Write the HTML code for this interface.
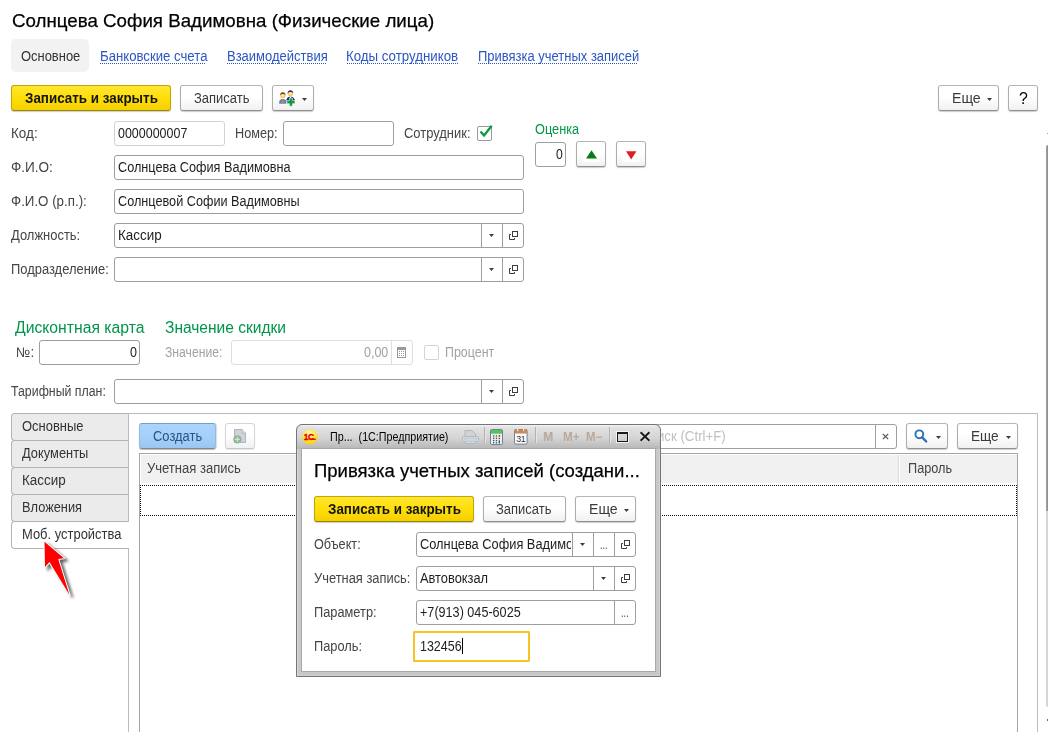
<!DOCTYPE html>
<html lang="ru">
<head>
<meta charset="utf-8">
<title>Солнцева София Вадимовна (Физические лица)</title>
<style>
html,body{margin:0;padding:0;background:#fff;}
body{width:1048px;height:736px;position:relative;overflow:hidden;font-family:"Liberation Sans",sans-serif;font-size:14px;color:#333;}
.a{position:absolute;box-sizing:border-box;display:block;}
.t{position:absolute;white-space:pre;transform-origin:0 0;}
.btn{position:absolute;box-sizing:border-box;border:1px solid #adadad;border-top-color:#b6b6b6;border-bottom-color:#909090;border-radius:3px;background:linear-gradient(#fff 0,#fff 45%,#f1f1f1 100%);box-shadow:0 1px 1px rgba(0,0,0,.20);}
.ybtn{border-color:#c2a500;border-bottom-color:#9c8600;background:linear-gradient(#ffe733 0,#ffdf0a 45%,#f5d000 100%);}
.bbtn{border-color:#8fbcdf;border-top-color:#6fa2c8;border-bottom-color:#848484;background:linear-gradient(#acd5fd 0,#a4cff9 55%,#9ac7f1 100%);box-shadow:0 1px 1px rgba(0,0,0,.25),1px 0 1px rgba(0,0,0,.12);}
.dbtn{border-color:#d6d6d6;border-bottom-color:#c6c6c6;box-shadow:0 1px 1px rgba(0,0,0,.10);}
.inp{position:absolute;box-sizing:border-box;border:1px solid #9e9e9e;border-radius:3px;background:#fff;}
.inp.ro{border-color:#d2d2d2;}
.inp.dis{border-color:#dedede;}
</style>
</head>
<body>
<div class="t" style="left:11.54px;top:10px;font-size:19px;line-height:22px;height:22px;color:#000;transform:scaleX(0.9853);-webkit-text-stroke:0.25px #000;">Солнцева София Вадимовна (Физические лица)</div>
<div class="a" style="left:11px;top:39px;width:78px;height:33px;background:#f2f2f2;border-radius:5px;"></div>
<div class="t" style="left:20.75px;top:48px;font-size:14px;line-height:16px;height:16px;color:#333;transform:scaleX(0.9240);">Основное</div>
<div class="t" style="left:99.74px;top:48px;font-size:14px;line-height:16px;height:16px;color:#2b55c6;transform:scaleX(0.9413);">Банковские счета</div>
<div class="a" style="left:100px;top:63px;width:106px;height:1px;background:repeating-linear-gradient(90deg,#2b55c6 0 1px,transparent 1px 2px);"></div>
<div class="t" style="left:226.55px;top:48px;font-size:14px;line-height:16px;height:16px;color:#2b55c6;transform:scaleX(0.9279);">Взаимодействия</div>
<div class="a" style="left:227px;top:63px;width:100px;height:1px;background:repeating-linear-gradient(90deg,#2b55c6 0 1px,transparent 1px 2px);"></div>
<div class="t" style="left:346.23px;top:48px;font-size:14px;line-height:16px;height:16px;color:#2b55c6;transform:scaleX(0.9490);">Коды сотрудников</div>
<div class="a" style="left:347px;top:63px;width:111px;height:1px;background:repeating-linear-gradient(90deg,#2b55c6 0 1px,transparent 1px 2px);"></div>
<div class="t" style="left:477.55px;top:48px;font-size:14px;line-height:16px;height:16px;color:#2b55c6;transform:scaleX(0.9270);">Привязка учетных записей</div>
<div class="a" style="left:478px;top:63px;width:160px;height:1px;background:repeating-linear-gradient(90deg,#2b55c6 0 1px,transparent 1px 2px);"></div>
<div class="btn ybtn" style="left:11px;top:85px;width:160px;height:26px;"></div>
<div class="t" style="left:24.83px;top:90px;font-size:14px;line-height:16px;height:16px;color:#141414;font-weight:700;transform:scaleX(0.9577);">Записать и закрыть</div>
<div class="btn " style="left:180px;top:85px;width:83px;height:26px;"></div>
<div class="t" style="left:193.65px;top:90px;font-size:14px;line-height:16px;height:16px;color:#3a3a3a;transform:scaleX(0.9257);">Записать</div>
<div class="btn " style="left:272px;top:85px;width:42px;height:26px;"></div>
<svg class="a" style="left:278px;top:89px" width="19" height="18" viewBox="0 0 19 18">
<defs><radialGradient id="hd" cx="50%" cy="45%" r="60%"><stop offset="0" stop-color="#fff3c4"/><stop offset="1" stop-color="#e9b24a"/></radialGradient></defs>
<path d="M8.6 10.2c1-2 2.4-2.6 3.9-2.6s3.1.7 4 2.6v2.6H8.6z" fill="#2b2f66"/>
<path d="M11.6 7.6h1.8l-.9 3z" fill="#fff"/>
<circle cx="12.4" cy="4.6" r="2.7" fill="url(#hd)"/>
<path d="M9.6 4.3c0-2 1.3-3 2.8-3s2.8 1 2.8 3c-.8-1-1.7-1.4-2.8-1.4s-2 .4-2.8 1.400z" fill="#35305a"/>
<path d="M1.200 14.800v-2.400c.6-1.900 2-2.500 3.600-2.500s3 .6 3.600 2.500v2.400z" fill="#5d89b4"/>
<path d="M4.300 10h1.100l.2 4.800H4.100z" fill="#ee7a5a"/>
<circle cx="4.800" cy="6.600" r="2.600" fill="url(#hd)"/>
<path d="M2.100 6.300c0-2 1.200-3 2.700-3s2.700 1 2.700 3c-.8-1-1.600-1.300-2.700-1.300s-1.900.3-2.700 1.300z" fill="#7a3b0c"/>
<path d="M11.400 9.100h3v2.600h2.600v3h-2.600v2.600h-3v-2.600H8.800v-3h2.600z" fill="#0b9a3e" stroke="#fff" stroke-width=".6"/>
</svg>
<svg class="a" style="left:302px;top:98px" width="5" height="3" viewBox="0 0 5 3"><path d="M0 0h5L2.5 3z" fill="#3c3c3c"/></svg>
<div class="btn " style="left:938px;top:85px;width:61px;height:26px;"></div>
<div class="t" style="left:951.61px;top:90px;font-size:14px;line-height:16px;height:16px;color:#3a3a3a;transform:scaleX(1.0063);">Еще</div>
<svg class="a" style="left:987px;top:98px" width="5" height="3" viewBox="0 0 5 3"><path d="M0 0h5L2.5 3z" fill="#3c3c3c"/></svg>
<div class="btn " style="left:1008px;top:85px;width:30px;height:26px;"></div>
<div class="t" style="left:1018.95px;top:89px;font-size:16px;line-height:20px;height:20px;color:#000;transform:scaleX(0.9903);">?</div>
<div class="t" style="left:11.13px;top:125px;font-size:14px;line-height:16px;height:16px;color:#454545;transform:scaleX(0.9631);">Код:</div>
<div class="inp ro" style="left:114px;top:121px;width:111px;height:25px;"></div>
<div class="t" style="left:118.06px;top:125px;font-size:14px;line-height:16px;height:16px;color:#1e1e1e;transform:scaleX(0.8909);">0000000007</div>
<div class="t" style="left:235.26px;top:125px;font-size:14px;line-height:16px;height:16px;color:#454545;transform:scaleX(0.9063);">Номер:</div>
<div class="inp " style="left:283px;top:121px;width:111px;height:25px;"></div>
<div class="t" style="left:403.95px;top:125px;font-size:14px;line-height:16px;height:16px;color:#454545;transform:scaleX(0.9245);">Сотрудник:</div>
<div class="a" style="left:477px;top:126px;width:15px;height:15px;border:1px solid #9a9a9a;border-radius:2px;background:#fff;"></div>
<svg class="a" style="left:478px;top:123px" width="17" height="16" viewBox="0 0 17 16"><path d="M2.500 8.500L6.100 12.500L13.700 2.700" fill="none" stroke="#0a9a46" stroke-width="2.300" stroke-linecap="butt" stroke-linejoin="miter"/></svg>
<div class="t" style="left:535.15px;top:121px;font-size:14px;line-height:16px;height:16px;color:#00964a;transform:scaleX(0.9109);">Оценка</div>
<div class="inp " style="left:535px;top:142px;width:31px;height:25px;"></div>
<div class="t" style="left:556.27px;top:146px;font-size:14px;line-height:16px;height:16px;color:#1e1e1e;transform:scaleX(0.8696);">0</div>
<div class="btn " style="left:576px;top:141px;width:30px;height:26px;"></div>
<div class="a" style="left:583px;top:146px;width:16px;height:16px;background:#fff;"></div>
<svg class="a" style="left:586px;top:150px" width="11" height="9" viewBox="0 0 11 9"><path d="M5.500 0.300L11 8.600H0z" fill="#0b7a12"/></svg>
<div class="btn " style="left:616px;top:141px;width:30px;height:26px;"></div>
<div class="a" style="left:623px;top:146px;width:16px;height:16px;background:#fff;"></div>
<svg class="a" style="left:626px;top:150.500px" width="11" height="9" viewBox="0 0 11 9"><path d="M0 0.300h10.400L5.200 8.400z" fill="#e11b22"/></svg>
<div class="t" style="left:11.13px;top:159px;font-size:14px;line-height:16px;height:16px;color:#454545;transform:scaleX(0.9680);">Ф.И.О:</div>
<div class="inp " style="left:114px;top:155px;width:410px;height:25px;"></div>
<div class="t" style="left:118.06px;top:159px;font-size:14px;line-height:16px;height:16px;color:#1e1e1e;transform:scaleX(0.9070);">Солнцева София Вадимовна</div>
<div class="t" style="left:11.13px;top:193px;font-size:14px;line-height:16px;height:16px;color:#454545;transform:scaleX(0.9517);">Ф.И.О (р.п.):</div>
<div class="inp " style="left:114px;top:189px;width:410px;height:25px;"></div>
<div class="t" style="left:118.06px;top:193px;font-size:14px;line-height:16px;height:16px;color:#1e1e1e;transform:scaleX(0.9056);">Солнцевой Софии Вадимовны</div>
<div class="t" style="left:10.75px;top:227px;font-size:14px;line-height:16px;height:16px;color:#454545;transform:scaleX(0.9253);">Должность:</div>
<div class="inp " style="left:114px;top:223px;width:410px;height:25px;"></div><div class="a" style="left:481px;top:224px;width:1px;height:23px;background:#9e9e9e;"></div><div class="a" style="left:502px;top:224px;width:1px;height:23px;background:#9e9e9e;"></div><svg class="a" style="left:489px;top:234px" width="5" height="3" viewBox="0 0 5 3"><path d="M0 0h5L2.5 3z" fill="#3c3c3c"/></svg><svg class="a" style="left:509px;top:231px" width="9" height="9" viewBox="0 0 9 9" fill="none" stroke="#3c3c3c" stroke-width="1"><rect x="3.5" y="0.5" width="5" height="5"/><path d="M2 3.5H0.5V8.5H5.5V7"/></svg>
<div class="t" style="left:118.03px;top:227px;font-size:14px;line-height:16px;height:16px;color:#1e1e1e;transform:scaleX(0.9587);">Кассир</div>
<div class="t" style="left:11.15px;top:261px;font-size:14px;line-height:16px;height:16px;color:#454545;transform:scaleX(0.9231);">Подразделение:</div>
<div class="inp " style="left:114px;top:257px;width:410px;height:25px;"></div><div class="a" style="left:481px;top:258px;width:1px;height:23px;background:#9e9e9e;"></div><div class="a" style="left:502px;top:258px;width:1px;height:23px;background:#9e9e9e;"></div><svg class="a" style="left:489px;top:268px" width="5" height="3" viewBox="0 0 5 3"><path d="M0 0h5L2.5 3z" fill="#3c3c3c"/></svg><svg class="a" style="left:509px;top:265px" width="9" height="9" viewBox="0 0 9 9" fill="none" stroke="#3c3c3c" stroke-width="1"><rect x="3.5" y="0.5" width="5" height="5"/><path d="M2 3.5H0.5V8.5H5.5V7"/></svg>
<div class="t" style="left:15.15px;top:318px;font-size:16px;line-height:20px;height:20px;color:#00964a;transform:scaleX(0.9827);">Дисконтная карта</div>
<div class="t" style="left:164.96px;top:318px;font-size:16px;line-height:20px;height:20px;color:#00964a;transform:scaleX(0.9712);">Значение скидки</div>
<div class="t" style="left:16.13px;top:344px;font-size:14px;line-height:16px;height:16px;color:#454545;transform:scaleX(0.9608);">№:</div>
<div class="inp " style="left:39px;top:340px;width:101px;height:25px;"></div>
<div class="t" style="left:130.16px;top:344px;font-size:14px;line-height:16px;height:16px;color:#1e1e1e;transform:scaleX(0.8952);">0</div>
<div class="t" style="left:165.07px;top:344px;font-size:14px;line-height:16px;height:16px;color:#a2a2a2;transform:scaleX(0.8696);">Значение:</div>
<div class="inp dis" style="left:231px;top:340px;width:182px;height:25px;"></div>
<div class="t" style="left:364.36px;top:344px;font-size:14px;line-height:16px;height:16px;color:#a2a2a2;transform:scaleX(0.8910);">0,00</div>
<div class="a" style="left:391px;top:341px;width:1px;height:23px;background:#dedede;"></div>
<svg class="a" style="left:397px;top:347px" width="9" height="11" viewBox="0 0 9 11"><rect x=".5" y=".5" width="8" height="10" fill="#fff" stroke="#9a9a9a"/><rect x="1" y="1" width="7" height="2" fill="#9a9a9a"/>
<g fill="#9a9a9a"><rect x="2" y="4" width="1" height="1"/><rect x="4" y="4" width="1" height="1"/><rect x="6" y="4" width="1" height="1"/><rect x="2" y="6" width="1" height="1"/><rect x="4" y="6" width="1" height="1"/><rect x="6" y="6" width="1" height="1"/><rect x="2" y="8" width="1" height="1"/><rect x="4" y="8" width="1" height="1"/><rect x="6" y="8" width="1" height="1"/></g></svg>
<div class="a" style="left:424px;top:345px;width:15px;height:15px;border:1px solid #d4d4d4;border-radius:2px;background:#fff;"></div>
<div class="t" style="left:444.86px;top:344px;font-size:14px;line-height:16px;height:16px;color:#a2a2a2;transform:scaleX(0.8889);">Процент</div>
<div class="t" style="left:11.07px;top:383px;font-size:14px;line-height:16px;height:16px;color:#454545;transform:scaleX(0.8826);">Тарифный план:</div>
<div class="inp " style="left:114px;top:379px;width:410px;height:25px;"></div><div class="a" style="left:481px;top:380px;width:1px;height:23px;background:#9e9e9e;"></div><div class="a" style="left:502px;top:380px;width:1px;height:23px;background:#9e9e9e;"></div><svg class="a" style="left:489px;top:390px" width="5" height="3" viewBox="0 0 5 3"><path d="M0 0h5L2.5 3z" fill="#3c3c3c"/></svg><svg class="a" style="left:509px;top:387px" width="9" height="9" viewBox="0 0 9 9" fill="none" stroke="#3c3c3c" stroke-width="1"><rect x="3.5" y="0.5" width="5" height="5"/><path d="M2 3.5H0.5V8.5H5.5V7"/></svg>
<div class="a" style="left:128px;top:413px;width:910px;height:319px;border:1px solid #bcbcbc;border-bottom:none;"></div>
<div class="a" style="left:11px;top:413px;width:118px;height:28px;border:1px solid #b4b4b4;border-right:1px solid #bcbcbc;border-radius:4px 0 0 4px;background:#ebebeb;"></div>
<div class="t" style="left:21.85px;top:418px;font-size:14px;line-height:16px;height:16px;color:#333;transform:scaleX(0.9254);">Основные</div>
<div class="a" style="left:11px;top:440px;width:118px;height:28px;border:1px solid #b4b4b4;border-right:1px solid #bcbcbc;border-radius:4px 0 0 4px;background:#ebebeb;"></div>
<div class="t" style="left:21.85px;top:445px;font-size:14px;line-height:16px;height:16px;color:#333;transform:scaleX(0.9184);">Документы</div>
<div class="a" style="left:11px;top:467px;width:118px;height:28px;border:1px solid #b4b4b4;border-right:1px solid #bcbcbc;border-radius:4px 0 0 4px;background:#ebebeb;"></div>
<div class="t" style="left:21.83px;top:472px;font-size:14px;line-height:16px;height:16px;color:#333;transform:scaleX(0.9587);">Кассир</div>
<div class="a" style="left:11px;top:494px;width:118px;height:28px;border:1px solid #b4b4b4;border-right:1px solid #bcbcbc;border-radius:4px 0 0 4px;background:#ebebeb;"></div>
<div class="t" style="left:21.85px;top:499px;font-size:14px;line-height:16px;height:16px;color:#333;transform:scaleX(0.9146);">Вложения</div>
<div class="a" style="left:11px;top:521px;width:118px;height:28px;border:1px solid #b4b4b4;border-right:none;border-radius:4px 0 0 4px;background:#fff;"></div>
<div class="t" style="left:21.85px;top:526px;font-size:14px;line-height:16px;height:16px;color:#333;transform:scaleX(0.9242);">Моб. устройства</div>
<div class="btn bbtn" style="left:139px;top:423px;width:77px;height:26px;"></div>
<div class="t" style="left:152.85px;top:428px;font-size:14px;line-height:16px;height:16px;color:#2b4f86;transform:scaleX(0.9241);">Создать</div>
<div class="btn dbtn" style="left:225px;top:423px;width:30px;height:26px;"></div>
<svg class="a" style="left:232px;top:428px" width="15" height="17" viewBox="0 0 15 17"><path d="M2.500 1.500h7.500l3.500 3.500v9.500H2.500z" fill="#d3d3d3" stroke="#a3b6d2"/><path d="M10 1.500v3.500h3.500" fill="#eee" stroke="#a3b6d2"/><circle cx="5.400" cy="11.400" r="4.200" fill="#8db596"/><path d="M5.400 8.800v5.200M2.800 11.400h5.200" stroke="#cfe3d3" stroke-width="1.300"/></svg>
<div class="inp " style="left:500px;top:424px;width:397px;height:25px;"></div>
<div class="t" style="left:639.54px;top:428px;font-size:14px;line-height:16px;height:16px;color:#c0c0c3;transform:scaleX(0.9477);">Поиск (Ctrl+F)</div>
<div class="a" style="left:875px;top:425px;width:1px;height:23px;background:#9e9e9e;"></div>
<svg class="a" style="left:882px;top:433px" width="7" height="7" viewBox="0 0 7 7"><path d="M.8.800l5.400 5.400M6.200.800L.8 6.200" stroke="#4a4a4a" stroke-width="1.100"/></svg>
<div class="btn " style="left:906px;top:423px;width:42px;height:26px;"></div>
<svg class="a" style="left:913px;top:428px" width="16" height="16" viewBox="0 0 16 16"><circle cx="6.300" cy="6.300" r="3.900" fill="#fff" stroke="#2c71b3" stroke-width="1.900"/><path d="M9.200 9.300l4 4.200" stroke="#2c71b3" stroke-width="2.400" stroke-linecap="round"/></svg>
<svg class="a" style="left:936px;top:436px" width="5" height="3" viewBox="0 0 5 3"><path d="M0 0h5L2.5 3z" fill="#3c3c3c"/></svg>
<div class="btn " style="left:957px;top:423px;width:61px;height:26px;"></div>
<div class="t" style="left:971.12px;top:428px;font-size:14px;line-height:16px;height:16px;color:#3a3a3a;transform:scaleX(0.9712);">Еще</div>
<svg class="a" style="left:1006px;top:436px" width="5" height="3" viewBox="0 0 5 3"><path d="M0 0h5L2.5 3z" fill="#3c3c3c"/></svg>
<div class="a" style="left:139px;top:453px;width:879px;height:279px;border:1px solid #a6a6a6;border-bottom:none;background:#fff;"></div>
<div class="a" style="left:141px;top:455px;width:876px;height:28px;background:#f0f0f0;"></div>
<div class="a" style="left:898px;top:455px;width:1px;height:28px;background:#dadada;"></div>
<div class="a" style="left:899px;top:455px;width:1px;height:28px;background:#fff;"></div>
<div class="t" style="left:147.34px;top:460px;font-size:14px;line-height:16px;height:16px;color:#454545;transform:scaleX(0.9302);">Учетная запись</div>
<div class="t" style="left:907.96px;top:460px;font-size:14px;line-height:16px;height:16px;color:#454545;transform:scaleX(0.9074);">Пароль</div>
<div class="a" style="left:140px;top:485px;width:877px;height:31px;border:1px dotted #111;"></div>
<svg class="a" style="left:30px;top:530px" width="60" height="80" viewBox="30 530 60 80"><defs><filter id="sh" x="-50%" y="-50%" width="200%" height="200%"><feGaussianBlur stdDeviation="1.500"/></filter></defs>
<path d="M44.500 541.800L64 558.200L58.200 559.100L69.500 595.100L49.500 562L45 566.900z" transform="translate(3.200 2.600)" fill="#000" stroke="#000" stroke-width="1.500" opacity=".62" filter="url(#sh)"/>
<path d="M44.500 541.800L64 558.200L58.200 559.100L69.500 595.100L49.500 562L45 566.900z" fill="#ff0000" stroke="#fff" stroke-width="2" stroke-linejoin="round" paint-order="stroke"/></svg>
<div class="a" style="left:1046px;top:145px;width:2px;height:366px;background:linear-gradient(90deg,#a4a4a4,#8e8e8e);border-radius:2px 0 0 0;"></div>
<div class="a" style="left:1046px;top:511px;width:2px;height:196px;background:#d6d6d6;border-radius:0 0 0 2px;"></div>
<div class="a" style="left:1047px;top:133px;width:1px;height:1px;background:#a0a0a0;"></div>
<div class="a" style="left:1047px;top:719px;width:1px;height:2px;background:#6a6a6a;"></div>
<div class="a" style="left:296px;top:424px;width:365px;height:253px;background:#c7c8ca;border:1px solid #757575;border-radius:6px 6px 0 0;box-shadow:inset 1px 0 0 #dadada,inset -1px 0 0 #d4d4d4,inset 0 -1px 0 #cfcfcf;"></div>
<div class="a" style="left:297px;top:425px;width:363px;height:24px;border-radius:6px 6px 0 0;background:linear-gradient(#f3f3f3 0,#e2e2e2 10%,#d4d4d4 55%,#b6b6b6 100%);"></div>
<div class="a" style="left:302px;top:449px;width:353px;height:222px;background:#fff;box-shadow:0 0 0 1px #a9a9a9;"></div>
<svg class="a" style="left:302px;top:429px" width="16" height="16" viewBox="0 0 16 16"><defs><radialGradient id="lg" cx="45%" cy="30%" r="75%"><stop offset="0" stop-color="#fffbc0"/><stop offset=".55" stop-color="#ffe83a"/><stop offset="1" stop-color="#f6c800"/></radialGradient></defs><circle cx="8" cy="8" r="7.600" fill="url(#lg)"/><text x="1.800" y="10.800" font-family="Liberation Sans, sans-serif" font-size="8.500" font-weight="700" fill="#e80000" stroke="#e80000" stroke-width=".35" letter-spacing="-0.5">1С</text><rect x="8.200" y="9.600" width="5.600" height="1.300" fill="#e80000"/></svg>
<div class="t" style="left:329.92px;top:430px;font-size:12px;line-height:15px;height:15px;color:#000;transform:scaleX(0.8933);">Пр...  (1С:Предприятие)</div>
<svg class="a" style="left:462px;top:430px" width="17" height="14" viewBox="0 0 17 14"><path d="M3 6.500V.5h6.800L13.500 4v2.500" fill="#d2d2d2" stroke="#aeb8c6"/><rect x=".5" y="6.500" width="16" height="5" rx="1.200" fill="#d6d9de" stroke="#aeb8c6"/><rect x="3" y="8.500" width="11" height="1.400" fill="#eef0f4" stroke="#aeb8c6" stroke-width=".6"/><path d="M3 11.500v2h11v-2" fill="#d6d9de" stroke="#aeb8c6"/></svg>
<div class="a" style="left:484px;top:427px;width:1px;height:16px;background:#b2b2b2;"></div>
<div class="a" style="left:485px;top:427px;width:1px;height:16px;background:#e6e6e6;"></div>
<svg class="a" style="left:490px;top:429px" width="13" height="16" viewBox="0 0 13 16"><rect x=".5" y=".5" width="12" height="15" rx="1.300" fill="#e9eef5" stroke="#6f8398"/><rect x="1" y="1" width="11" height="3.700" fill="#52c654"/>
<g fill="#4b4b4b"><rect x="3" y="6.300" width="1.300" height="1.300"/><rect x="5.800" y="6.300" width="1.300" height="1.300"/><rect x="3" y="8.600" width="1.300" height="1.300"/><rect x="5.800" y="8.600" width="1.300" height="1.300"/><rect x="8.700" y="8.900" width="1.300" height="1.300"/><rect x="3" y="10.900" width="1.300" height="1.300"/><rect x="5.800" y="10.900" width="1.300" height="1.300"/><rect x="3" y="13.100" width="1.300" height="1.300"/><rect x="5.800" y="13.100" width="1.300" height="1.300"/><rect x="8.700" y="11.400" width="1.300" height="3"/></g><rect x="8.700" y="5.900" width="1.400" height="2.100" fill="#f02a2a"/></svg>
<svg class="a" style="left:514px;top:428px" width="14" height="17" viewBox="0 0 14 17"><rect x=".5" y="1.500" width="12.600" height="14.600" rx="1.300" fill="#fbfcfe" stroke="#6f8398"/><path d="M.8 5.400V3c0-.9.500-1.400 1.400-1.400h9.300c.9 0 1.400.5 1.400 1.400v2.400z" fill="#c98a55"/><rect x="3.200" y=".6" width="1" height="2.600" fill="#fff"/><rect x="9.200" y=".6" width="1" height="2.600" fill="#fff"/><text x="2.300" y="13.800" font-family="Liberation Sans, sans-serif" font-size="8.800" fill="#333" letter-spacing="-0.5">31</text></svg>
<div class="a" style="left:535px;top:427px;width:1px;height:16px;background:#b2b2b2;"></div>
<div class="a" style="left:536px;top:427px;width:1px;height:16px;background:#e6e6e6;"></div>
<div class="t" style="left:543.28px;top:430px;font-size:12px;line-height:15px;height:15px;color:#b9a89b;font-weight:700;">M</div>
<div class="t" style="left:563.29px;top:430px;font-size:12px;line-height:15px;height:15px;color:#b9a89b;font-weight:700;transform:scaleX(0.9720);">M+</div>
<div class="t" style="left:586.40px;top:430px;font-size:12px;line-height:15px;height:15px;color:#b9a89b;font-weight:700;transform:scaleX(0.9485);">M−</div>
<div class="a" style="left:609px;top:427px;width:1px;height:16px;background:#b2b2b2;"></div>
<div class="a" style="left:610px;top:427px;width:1px;height:16px;background:#e6e6e6;"></div>
<div class="a" style="left:617px;top:432px;width:11px;height:10px;border:1px solid #1b1b1b;border-top-width:2px;box-shadow:0 0 0 1px rgba(255,255,255,.7);"></div>
<svg class="a" style="left:638.500px;top:431px" width="12" height="11" viewBox="0 0 12 11"><path d="M1.600 1.300l8.800 8.400M10.400 1.300L1.600 9.700" stroke="#fff" stroke-width="3.600" opacity=".6"/><path d="M1.600 1.300l8.800 8.400M10.400 1.300L1.600 9.700" stroke="#1b1b1b" stroke-width="2.100"/></svg>
<div class="t" style="left:314.35px;top:460px;font-size:19px;line-height:22px;height:22px;color:#000;transform:scaleX(0.9735);-webkit-text-stroke:0.25px #000;">Привязка учетных записей (создани...</div>
<div class="btn ybtn" style="left:314px;top:496px;width:160px;height:26px;"></div>
<div class="t" style="left:327.83px;top:501px;font-size:14px;line-height:16px;height:16px;color:#141414;font-weight:700;transform:scaleX(0.9577);">Записать и закрыть</div>
<div class="btn " style="left:483px;top:496px;width:83px;height:26px;"></div>
<div class="t" style="left:496.15px;top:501px;font-size:14px;line-height:16px;height:16px;color:#3a3a3a;transform:scaleX(0.9257);">Записать</div>
<div class="btn " style="left:575px;top:496px;width:61px;height:26px;"></div>
<div class="t" style="left:588.61px;top:501px;font-size:14px;line-height:16px;height:16px;color:#3a3a3a;transform:scaleX(1.0063);">Еще</div>
<svg class="a" style="left:624px;top:509px" width="5" height="3" viewBox="0 0 5 3"><path d="M0 0h5L2.5 3z" fill="#3c3c3c"/></svg>
<div class="t" style="left:313.86px;top:536px;font-size:14px;line-height:16px;height:16px;color:#454545;transform:scaleX(0.9050);">Объект:</div>
<div class="inp " style="left:416px;top:532px;width:220px;height:25px;"></div>
<div class="a" style="left:420px;top:533px;width:150.5px;height:23px;overflow:hidden;"><div class="t" style="left:-0.300px;top:3px;font-size:14px;line-height:16px;height:16px;color:#1e1e1e;transform:scaleX(0.9150);transform-origin:0 0;">Солнцева София Вадимовна</div></div>
<div class="a" style="left:572px;top:533px;width:1px;height:23px;background:#9e9e9e;"></div>
<div class="a" style="left:593px;top:533px;width:1px;height:23px;background:#9e9e9e;"></div>
<div class="a" style="left:614px;top:533px;width:1px;height:23px;background:#9e9e9e;"></div>
<svg class="a" style="left:580px;top:543px" width="5" height="3" viewBox="0 0 5 3"><path d="M0 0h5L2.5 3z" fill="#3c3c3c"/></svg>
<div class="t" style="left:600.08px;top:536px;font-size:14px;line-height:16px;height:16px;color:#4a4a4a;transform:scaleX(0.6494);">...</div>
<svg class="a" style="left:621px;top:540px" width="9" height="9" viewBox="0 0 9 9" fill="none" stroke="#3c3c3c" stroke-width="1"><rect x="3.5" y="0.5" width="5" height="5"/><path d="M2 3.5H0.5V8.5H5.5V7"/></svg>
<div class="t" style="left:313.85px;top:570px;font-size:14px;line-height:16px;height:16px;color:#454545;transform:scaleX(0.9205);">Учетная запись:</div>
<div class="inp " style="left:416px;top:566px;width:220px;height:25px;"></div>
<div class="t" style="left:420.05px;top:570px;font-size:14px;line-height:16px;height:16px;color:#1e1e1e;transform:scaleX(0.9171);">Автовокзал</div>
<div class="a" style="left:593px;top:567px;width:1px;height:23px;background:#9e9e9e;"></div>
<div class="a" style="left:614px;top:567px;width:1px;height:23px;background:#9e9e9e;"></div>
<svg class="a" style="left:601px;top:577px" width="5" height="3" viewBox="0 0 5 3"><path d="M0 0h5L2.5 3z" fill="#3c3c3c"/></svg>
<svg class="a" style="left:621px;top:574px" width="9" height="9" viewBox="0 0 9 9" fill="none" stroke="#3c3c3c" stroke-width="1"><rect x="3.5" y="0.5" width="5" height="5"/><path d="M2 3.5H0.5V8.5H5.5V7"/></svg>
<div class="t" style="left:313.85px;top:604px;font-size:14px;line-height:16px;height:16px;color:#454545;transform:scaleX(0.9140);">Параметр:</div>
<div class="inp " style="left:416px;top:600px;width:220px;height:25px;"></div>
<div class="t" style="left:420.06px;top:604px;font-size:14px;line-height:16px;height:16px;color:#1e1e1e;transform:scaleX(0.9013);">+7(913) 045-6025</div>
<div class="a" style="left:614px;top:601px;width:1px;height:23px;background:#9e9e9e;"></div>
<div class="t" style="left:620.87px;top:604px;font-size:14px;line-height:16px;height:16px;color:#4a4a4a;transform:scaleX(0.6666);">...</div>
<div class="t" style="left:313.85px;top:638px;font-size:14px;line-height:16px;height:16px;color:#454545;transform:scaleX(0.9164);">Пароль:</div>
<div class="a" style="left:413px;top:631px;width:117px;height:31px;border:2px solid #f7c328;border-radius:1px;background:#fff;"></div>
<div class="t" style="left:420.06px;top:638px;font-size:14px;line-height:16px;height:16px;color:#1e1e1e;transform:scaleX(0.8900);">132456</div>
<div class="a" style="left:462px;top:638px;width:1px;height:16px;background:#000;"></div>
</body>
</html>
